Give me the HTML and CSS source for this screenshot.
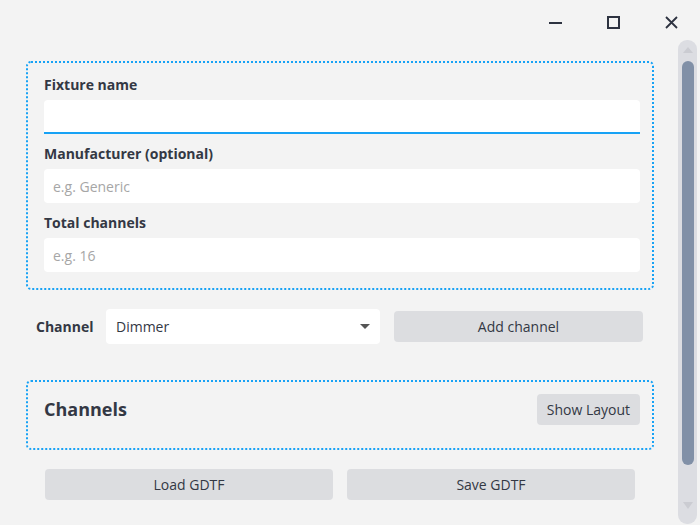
FILE: index.html
```html
<!DOCTYPE html>
<html>
<head>
<meta charset="utf-8">
<link rel="stylesheet" href="styles.css">
</head>
<body>
<div class="window">
  <div class="titlebar">
    <div class="ctl">
      <svg width="14" height="14" viewBox="0 0 14 14"><rect x="0" y="6" width="13" height="2" fill="#2d3240"/></svg>
    </div>
    <div class="ctl">
      <svg width="14" height="14" viewBox="0 0 14 14"><rect x="1" y="1" width="11" height="11" fill="none" stroke="#2d3240" stroke-width="2"/></svg>
    </div>
    <div class="ctl">
      <svg width="14" height="14" viewBox="0 0 14 14"><path d="M1 1 L12 12 M12 1 L1 12" stroke="#2d3240" stroke-width="1.8" fill="none"/></svg>
    </div>
  </div>
  <div class="main">
    <div class="content">
      <div class="box form">
        <label class="lbl">Fixture name</label>
        <div class="input focused"></div>
        <label class="lbl">Manufacturer (optional)</label>
        <div class="input"><span class="ph">e.g. Generic</span></div>
        <label class="lbl">Total channels</label>
        <div class="input"><span class="ph">e.g. 16</span></div>
      </div>
      <div class="chanrow">
        <span class="chlbl">Channel</span>
        <div class="select"><span>Dimmer</span>
          <svg width="10" height="6" viewBox="0 0 10 6"><path d="M0 0 L10 0 L5 5 Z" fill="#555"/></svg>
        </div>
        <button class="btn add">Add channel</button>
      </div>
      <div class="box channels">
        <span class="chtitle">Channels</span>
        <button class="btn">Show Layout</button>
      </div>
      <div class="bottom">
        <button class="btn wide">Load GDTF</button>
        <button class="btn wide">Save GDTF</button>
      </div>
    </div>
    <div class="scrollbar">
      <svg class="arr" width="10" height="7" viewBox="0 0 10 7"><path d="M0 6 L10 6 L5 0 Z" fill="#cbccd2"/></svg>
      <div class="thumb"></div>
      <div class="fill"></div>
      <svg class="arr" width="10" height="7" viewBox="0 0 10 7"><path d="M0 0 L10 0 L5 7 Z" fill="#cbccd2"/></svg>
    </div>
  </div>
</div>
</body>
</html>
```
FILE: styles.css
```css
html, body {
  margin: 0;
  padding: 0;
  background: #f3f3f3;
  font-family: "Open Sans", "Noto Sans", sans-serif;
  color: #333844;
}
.window {
  width: 700px;
  height: 525px;
  display: flex;
  flex-direction: column;
}
.titlebar {
  height: 40px;
  display: flex;
  justify-content: flex-end;
  padding-right: 21px;
  gap: 44px;
  align-items: flex-start;
}
.ctl {
  padding-top: 13px;
  width: 14px;
}
.main {
  display: flex;
  flex: 1;
}
.content {
  margin-left: 26px;
  width: 628px;
  padding-top: 21px;
}
.box {
  border: 2px dotted #17a2f5;
  border-radius: 5px;
}
.form {
  padding: 12px 12px 16px 16px;
  display: flex;
  flex-direction: column;
}
.lbl {
  font-weight: 700;
  font-size: 14px;
  line-height: 20px;
  height: 20px;
  margin-bottom: 5px;
}
.input {
  height: 34px;
  background: #fff;
  border-radius: 4px;
  box-sizing: border-box;
  padding-left: 9px;
  display: flex;
  align-items: center;
  margin-bottom: 10px;
}
.input:last-child { margin-bottom: 0; }
.input.focused {
  border-bottom: 2px solid #17a2f5;
  border-radius: 4px 4px 0 0;
}
.ph {
  color: #a6a6a6;
  font-size: 14px;
}
.chanrow {
  display: flex;
  align-items: center;
  margin-top: 19px;
  padding-left: 10px;
}
.chlbl {
  font-weight: 700;
  font-size: 14px;
  width: 70px;
}
.select {
  width: 274px;
  height: 35px;
  background: #fff;
  border-radius: 4px;
  box-sizing: border-box;
  padding: 0 10px;
  display: flex;
  align-items: center;
  justify-content: space-between;
  font-size: 14px;
}
.btn {
  font-family: inherit;
  font-size: 14px;
  color: #333844;
  background: #dcdde0;
  border: none;
  border-radius: 4px;
  height: 31px;
  padding: 0 10px;
}
.add {
  width: 249px;
  margin-left: 14px;
}
.channels {
  margin-top: 36px;
  height: 70px;
  box-sizing: border-box;
  display: flex;
  align-items: center;
  justify-content: space-between;
  padding: 0 12px 12px 16px;
}
.chtitle {
  font-weight: 700;
  font-size: 18px;
}
.bottom {
  display: flex;
  gap: 14px;
  padding: 0 19px;
  margin-top: 19px;
}
.wide {
  flex: 1;
}
.scrollbar {
  margin-left: 24px;
  width: 19px;
  height: 484px;
  background: #dcdde2;
  border-radius: 9px;
  display: flex;
  flex-direction: column;
  align-items: center;
  padding: 7px 0 15px;
  box-sizing: border-box;
}
.arr { flex: none; }
.thumb {
  width: 12px;
  height: 404px;
  background: #8190a7;
  border-radius: 6px;
  margin-top: 7px;
}
.fill { flex: 1; }
```
